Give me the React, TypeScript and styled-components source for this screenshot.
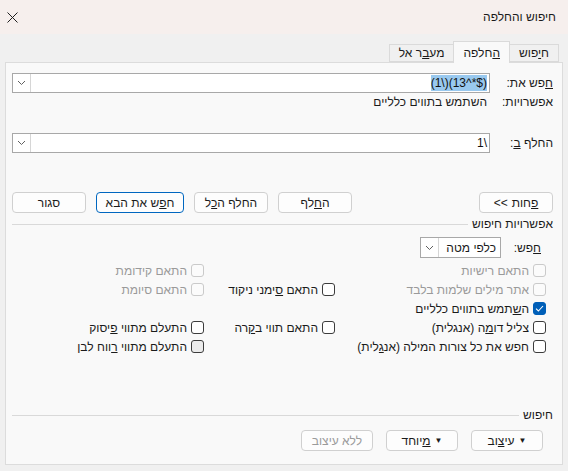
import React from "react";
import styled, { createGlobalStyle } from "styled-components";

const GlobalStyle = createGlobalStyle`
  html, body {
    margin: 0;
    padding: 0;
    background: #f0f0f0;
  }
  body {
    font-family: "Liberation Sans", "DejaVu Sans", Arial, sans-serif;
    font-size: 12px;
    color: #1b1b1b;
  }
`;

const Window = styled.div`
  width: 568px;
  height: 471px;
  display: flex;
  flex-direction: column;
  direction: rtl;
  background: #f0f0f0;
  overflow: hidden;
`;

const TitleBar = styled.div`
  height: 34px;
  flex: none;
  display: flex;
  align-items: center;
  justify-content: space-between;
  padding: 0 12px 0 7px;
  background: #f6efed;
`;

const Title = styled.div`
  font-size: 12px;
  color: #1a1a1a;
`;

const CloseIcon = styled.svg`
  width: 11px;
  height: 11px;
  display: block;
`;

const TabStrip = styled.div`
  height: 28px;
  flex: none;
  display: flex;
  align-items: flex-end;
  padding-right: 9px;
`;

const Tab = styled.div<{ $active?: boolean }>`
  height: ${(p) => (p.$active ? "22px" : "18px")};
  padding: 0 9px;
  display: flex;
  align-items: center;
  box-sizing: border-box;
  border: 1px solid #dadada;
  border-bottom: ${(p) => (p.$active ? "none" : "1px solid #dadada")};
  background: ${(p) => (p.$active ? "#f9f9f9" : "#f0f0f0")};
  margin-bottom: ${(p) => (p.$active ? "-1px" : "0")};
  position: relative;
  z-index: ${(p) => (p.$active ? 1 : 0)};
  & + & {
    margin-right: -1px;
  }
`;

const Panel = styled.div`
  flex: 1;
  margin: 0 5px 6px 5px;
  border: 1px solid #dcdcdc;
  background: #f9f9f9;
  display: flex;
  flex-direction: column;
  padding: 10px 9px 13px 6px;
`;

const FieldRow = styled.div<{ $gap?: number }>`
  display: flex;
  align-items: center;
  margin-top: ${(p) => p.$gap ?? 0}px;
`;

const FieldLabel = styled.div`
  width: 63px;
  flex: none;
`;

const Combo = styled.div`
  flex: 1;
  height: 20px;
  box-sizing: border-box;
  display: flex;
  background: #ffffff;
  border: 1px solid #a8a8a8;
`;

const ComboText = styled.div`
  flex: 1;
  display: flex;
  align-items: center;
  padding: 0 2px;
  color: #111;
`;

/* the field shows its text in visual order, as the reference does */
const Visual = styled.span<{ $selected?: boolean }>`
  direction: ltr;
  unicode-bidi: bidi-override;
  background: ${(p) => (p.$selected ? "#99c9ef" : "transparent")};
  padding: 1px 0;
`;

const DropButton = styled.div`
  width: 17px;
  flex: none;
  display: flex;
  align-items: center;
  justify-content: center;
  border-right: 1px solid #d6d6d6;
  background: #ffffff;
`;

const InfoRow = styled.div`
  display: flex;
  height: 14px;
  align-items: center;
  margin-top: 2px;
`;

const InfoValue = styled.div`
  padding-right: 3px;
`;

const ButtonRow = styled.div<{ $gap: number }>`
  display: flex;
  justify-content: space-between;
  align-items: center;
  margin-top: ${(p) => p.$gap}px;
`;

const ButtonGroup = styled.div<{ $gap?: number; $inset?: number }>`
  display: flex;
  gap: ${(p) => p.$gap ?? 10}px;
  margin-right: ${(p) => p.$inset ?? 0}px;
`;

const PushButton = styled.div<{ $width: number; $default?: boolean; $disabled?: boolean }>`
  width: ${(p) => p.$width}px;
  height: 21px;
  box-sizing: border-box;
  display: flex;
  align-items: center;
  justify-content: center;
  gap: 4px;
  border: 1px solid ${(p) => (p.$default ? "#0067c0" : "#d0d0d0")};
  border-radius: 4px;
  background: #fdfdfd;
  color: ${(p) => (p.$disabled ? "#9b9b9b" : "#1b1b1b")};
`;

const Arrows = styled.span`
  direction: ltr;
  unicode-bidi: isolate;
`;

const GroupHeading = styled.div<{ $gap: number }>`
  display: flex;
  align-items: center;
  gap: 4px;
  height: 14px;
  margin-top: ${(p) => p.$gap}px;
  &::after {
    content: "";
    flex: 1;
    height: 1px;
    background: #d9d9d9;
  }
`;

const OptionsBody = styled.div`
  padding-right: 7px;
  margin-top: 6px;
`;

const SearchRow = styled.div`
  display: flex;
  align-items: center;
`;

const SearchLabel = styled.div`
  width: 45px;
  flex: none;
  box-sizing: border-box;
  padding-right: 5px;
`;

const SelectBox = styled.div`
  width: 81px;
  height: 21px;
  box-sizing: border-box;
  display: flex;
  background: #ffffff;
  border: 1px solid #a8a8a8;
`;

const SelectText = styled.div`
  flex: 1;
  display: flex;
  align-items: center;
  padding-right: 4px;
`;

const CheckGrid = styled.div`
  display: grid;
  grid-template-columns: 211px 131px 1fr;
  grid-auto-rows: 19px;
  margin-top: 3px;
`;

const CheckItem = styled.div<{ $disabled?: boolean }>`
  display: flex;
  align-items: center;
  gap: 4px;
  color: ${(p) => (p.$disabled ? "#9a9a9a" : "#1b1b1b")};
  white-space: nowrap;
`;

const Box = styled.div<{ $checked?: boolean; $disabled?: boolean; $shaded?: boolean }>`
  width: 13px;
  height: 13px;
  flex: none;
  box-sizing: border-box;
  border-radius: 3px;
  display: flex;
  align-items: center;
  justify-content: center;
  border: 1px solid
    ${(p) => (p.$checked ? "#005fb8" : p.$disabled ? "#cacaca" : "#3c3c3c")};
  background: ${(p) =>
    p.$checked ? "#005fb8" : p.$shaded ? "#ebebeb" : p.$disabled ? "#fbfbfb" : "#ffffff"};
`;

const Spacer = styled.div`
  flex: 1;
`;

const Caret = styled.span`
  font-size: 8px;
  line-height: 1;
`;

const Chevron = () => (
  <svg width="9" height="6" viewBox="0 0 9 6">
    <path d="M1 1 L4.5 4.5 L8 1" fill="none" stroke="#606060" strokeWidth="1" />
  </svg>
);

const Check = ({
  label,
  checked,
  disabled,
  shaded,
}: {
  label?: React.ReactNode;
  checked?: boolean;
  disabled?: boolean;
  shaded?: boolean;
}) =>
  label ? (
    <CheckItem $disabled={disabled}>
      <Box $checked={checked} $disabled={disabled} $shaded={shaded}>
        {checked && (
          <svg width="9" height="7" viewBox="0 0 9 7">
            <path d="M1 3.6 L3.4 6 L8 1" fill="none" stroke="#fff" strokeWidth="1.1" />
          </svg>
        )}
      </Box>
      <span>{label}</span>
    </CheckItem>
  ) : (
    <div />
  );

export default function App() {
  return (
    <>
      <GlobalStyle />
      <Window>
        <TitleBar>
          <Title>חיפוש והחלפה</Title>
          <CloseIcon viewBox="0 0 11 11">
            <path d="M0.5 0.5 L10.5 10.5 M10.5 0.5 L0.5 10.5" stroke="#1f1f1f" strokeWidth="1" />
          </CloseIcon>
        </TitleBar>

        <TabStrip>
          <Tab>
            <span>
              ח<u>י</u>פוש
            </span>
          </Tab>
          <Tab $active>
            <span>
              <u>ה</u>חלפה
            </span>
          </Tab>
          <Tab>
            <span>
              מע<u>ב</u>ר אל
            </span>
          </Tab>
        </TabStrip>

        <Panel>
          <FieldRow>
            <FieldLabel>
              <u>ח</u>פש את:
            </FieldLabel>
            <Combo>
              <ComboText>
                <Visual $selected>(1\)(13^*$)</Visual>
              </ComboText>
              <DropButton>
                <Chevron />
              </DropButton>
            </Combo>
          </FieldRow>
          <InfoRow>
            <FieldLabel>אפשרויות:</FieldLabel>
            <InfoValue>השתמש בתווים כלליים</InfoValue>
          </InfoRow>

          <FieldRow $gap={24}>
            <FieldLabel>
              החלף <u>ב</u>:
            </FieldLabel>
            <Combo>
              <ComboText>
                <Visual>1\</Visual>
              </ComboText>
              <DropButton>
                <Chevron />
              </DropButton>
            </Combo>
          </FieldRow>

          <ButtonRow $gap={39}>
            <PushButton $width={74}>
              <span>
                <u>פ</u>חות
              </span>
              <Arrows>{"<<"}</Arrows>
            </PushButton>
            <ButtonGroup>
              <PushButton $width={74}>
                <span>
                  ה<u>ח</u>לף
                </span>
              </PushButton>
              <PushButton $width={74}>
                <span>
                  החלף ה<u>כ</u>ל
                </span>
              </PushButton>
              <PushButton $width={88} $default>
                <span>
                  ח<u>פ</u>ש את הבא
                </span>
              </PushButton>
              <PushButton $width={74}>
                <span>סגור</span>
              </PushButton>
            </ButtonGroup>
          </ButtonRow>

          <GroupHeading $gap={4}>אפשרויות חיפוש</GroupHeading>

          <OptionsBody>
            <SearchRow>
              <SearchLabel>
                <u>ח</u>פש:
              </SearchLabel>
              <SelectBox>
                <SelectText>כלפי מטה</SelectText>
                <DropButton>
                  <Chevron />
                </DropButton>
              </SelectBox>
            </SearchRow>

            <CheckGrid>
              <Check label="התאם רישיות" disabled />
              <Check />
              <Check label="התאם קידומת" disabled />

              <Check label="אתר מילים שלמות בלבד" disabled />
              <Check
                label={
                  <>
                    התאם <u>ס</u>ימני ניקוד
                  </>
                }
              />
              <Check label="התאם סיומת" disabled />

              <Check
                checked
                label={
                  <>
                    ה<u>ש</u>תמש בתווים כלליים
                  </>
                }
              />
              <Check />
              <Check />

              <Check
                label={
                  <>
                    צליל דו<u>מ</u>ה (אנגלית)
                  </>
                }
              />
              <Check
                label={
                  <>
                    התאם תווי ב<u>ק</u>רה
                  </>
                }
              />
              <Check
                label={
                  <>
                    התעלם מתווי <u>פ</u>יסוק
                  </>
                }
              />

              <Check
                label={
                  <>
                    חפש את כל צורות המילה (אנ<u>ג</u>לית)
                  </>
                }
              />
              <Check />
              <Check
                shaded
                label={
                  <>
                    התעלם מתווי <u>ר</u>ווח לבן
                  </>
                }
              />
            </CheckGrid>
          </OptionsBody>

          <Spacer />

          <GroupHeading $gap={0}>חיפוש</GroupHeading>
          <ButtonRow $gap={8}>
            <ButtonGroup $gap={13} $inset={10}>
              <PushButton $width={72}>
                <Caret>▼</Caret>
                <span>
                  עי<u>צ</u>וב
                </span>
              </PushButton>
              <PushButton $width={72}>
                <Caret>▼</Caret>
                <span>
                  <u>מ</u>יוחד
                </span>
              </PushButton>
              <PushButton $width={72} $disabled>
                <span>ללא עיצוב</span>
              </PushButton>
            </ButtonGroup>
          </ButtonRow>
        </Panel>
      </Window>
    </>
  );
}
